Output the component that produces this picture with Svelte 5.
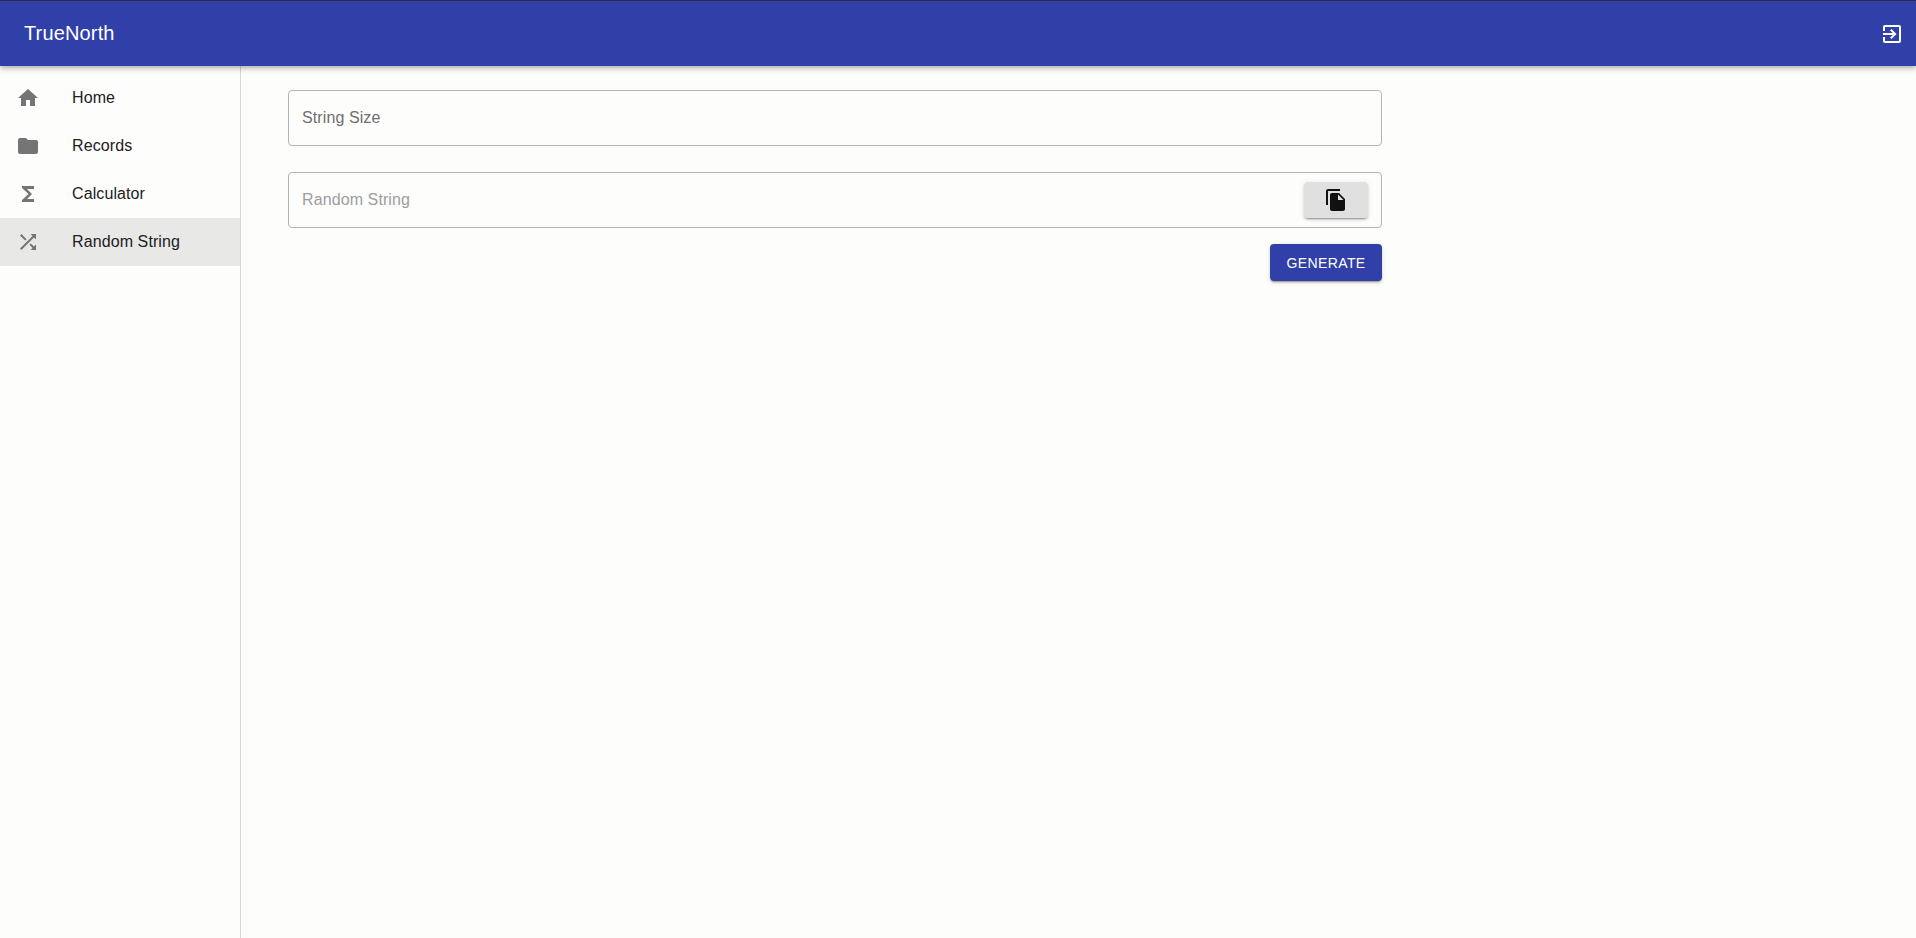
<script>
  let size = $state('')
  let result = $state('')

  const items = [
    { label: 'Home', d: 'M10 20v-6h4v6h5v-8h3L12 3 2 12h3v8z' },
    { label: 'Records', d: 'M10 4H4c-1.1 0-1.99.9-1.99 2L2 18c0 1.1.9 2 2 2h16c1.1 0 2-.9 2-2V8c0-1.1-.9-2-2-2h-8l-2-2z' },
    { label: 'Calculator', d: 'M18 4H6v2l6.5 6L6 18v2h12v-3h-7l5-5-5-5h7z' },
    { label: 'Random String', d: 'M10.59 9.17 5.41 4 4 5.41l5.17 5.17 1.42-1.41zM14.5 4l2.04 2.04L4 18.59 5.41 20 17.96 7.46 20 9.5V4h-5.5zm.33 9.41-1.41 1.41 3.13 3.13L14.5 20H20v-5.5l-2.04 2.04-3.13-3.13z' }
  ]
  let active = 'Random String'
</script>

<div class="page">
  <header class="appbar">
    <span class="brand">TrueNorth</span>
    <button class="logout" aria-label="Log out">
      <svg viewBox="0 0 24 24" width="24" height="24"><path d="M10.09 15.59 11.5 17l5-5-5-5-1.41 1.41L12.67 11H3v2h9.67l-2.58 2.59zM19 3H5c-1.11 0-2 .9-2 2v4h2V5h14v14H5v-4H3v4c0 1.1.89 2 2 2h14c1.1 0 2-.9 2-2V5c0-1.1-.9-2-2-2z"/></svg>
    </button>
  </header>

  <div class="body">
    <nav class="sidebar">
      {#each items as item}
        <div class="item" class:active={item.label === active}>
          <svg viewBox="0 0 24 24" width="24" height="24"><path d={item.d}/></svg>
          <span>{item.label}</span>
        </div>
      {/each}
    </nav>

    <main class="content">
      <div class="form">
        <div class="field">
          <input class="size" placeholder="String Size" bind:value={size} />
        </div>
        <div class="field">
          <input class="result" placeholder="Random String" bind:value={result} disabled />
          <button class="copy" aria-label="Copy">
            <svg viewBox="0 0 24 24" width="24" height="24"><path d="M16 1H4c-1.1 0-2 .9-2 2v14h2V3h12V1zm-1 4 6 6v10c0 1.1-.9 2-2 2H7.99C6.89 23 6 22.1 6 21l.01-14c0-1.1.89-2 1.99-2h7zm-1 7h5.5L14 6.5V12z"/></svg>
          </button>
        </div>
        <div class="actions">
          <button class="generate">GENERATE</button>
        </div>
      </div>
    </main>
  </div>
</div>

<style>
  :global(body) {
    margin: 0;
    background: #fdfdfb;
    font-family: "Liberation Sans", Arial, sans-serif;
  }

  .page {
    height: 938px;
    display: flex;
    flex-direction: column;
    overflow: hidden;
  }

  .appbar {
    flex: none;
    box-sizing: border-box;
    height: 66px;
    display: flex;
    align-items: center;
    justify-content: space-between;
    padding: 0 12px 0 24px;
    background: #3040a8;
    border-top: 1px solid #2c2c44;
    color: #fff;
    box-shadow: 0 2px 4px -1px rgba(0, 0, 0, 0.2), 0 4px 5px rgba(0, 0, 0, 0.14);
    position: relative;
    z-index: 2;
  }
  .brand { font-size: 20px; font-weight: 400; letter-spacing: 0.15px; }
  .logout {
    display: flex;
    padding: 0;
    border: 0;
    background: none;
    fill: #fff;
  }

  .body { flex: 1; display: flex; min-height: 0; }

  .sidebar {
    flex: none;
    box-sizing: border-box;
    width: 241px;
    padding-top: 8px;
    border-right: 1px solid #d8d8d8;
  }
  .item {
    height: 48px;
    display: flex;
    align-items: center;
    gap: 32px;
    padding-left: 16px;
    font-size: 16px;
    letter-spacing: 0.1px;
    color: #212121;
  }
  .item svg { fill: #757575; flex: none; }
  .item.active { background: #e8e8e6; }

  .content { flex: 1; padding: 24px 47px; }
  .form {
    width: 1094px;
    display: flex;
    flex-direction: column;
    gap: 26px;
  }
  .field {
    box-sizing: border-box;
    height: 56px;
    display: flex;
    align-items: center;
    padding: 0 13px 0 13px;
    border: 1px solid #b4b4b4;
    border-radius: 4px;
  }
  input {
    flex: 1;
    min-width: 0;
    border: 0;
    outline: 0;
    padding: 0;
    background: none;
    font: inherit;
    font-size: 16px;
    letter-spacing: 0.1px;
  }
  input.size::placeholder { color: #6f6f6f; opacity: 1; }
  input.result::placeholder { color: #9e9e9e; opacity: 1; }

  .copy {
    flex: none;
    width: 64px;
    height: 36px;
    display: flex;
    align-items: center;
    justify-content: center;
    padding: 0;
    border: 0;
    border-radius: 4px;
    background: #e0e0e0;
    box-shadow: 0 3px 1px -2px rgba(0, 0, 0, 0.2), 0 2px 2px rgba(0, 0, 0, 0.14), 0 1px 5px rgba(0, 0, 0, 0.12);
    fill: #111;
  }

  .actions { display: flex; justify-content: flex-end; margin-top: -10px; }
  .generate {
    box-sizing: border-box;
    width: 112px;
    height: 37px;
    border: 0;
    border-radius: 4px;
    background: #3040a8;
    color: #fff;
    font-family: inherit;
    font-size: 14px;
    font-weight: 400;
    letter-spacing: 0.4px;
    box-shadow: 0 3px 1px -2px rgba(0, 0, 0, 0.2), 0 2px 2px rgba(0, 0, 0, 0.14), 0 1px 5px rgba(0, 0, 0, 0.12);
  }
</style>
